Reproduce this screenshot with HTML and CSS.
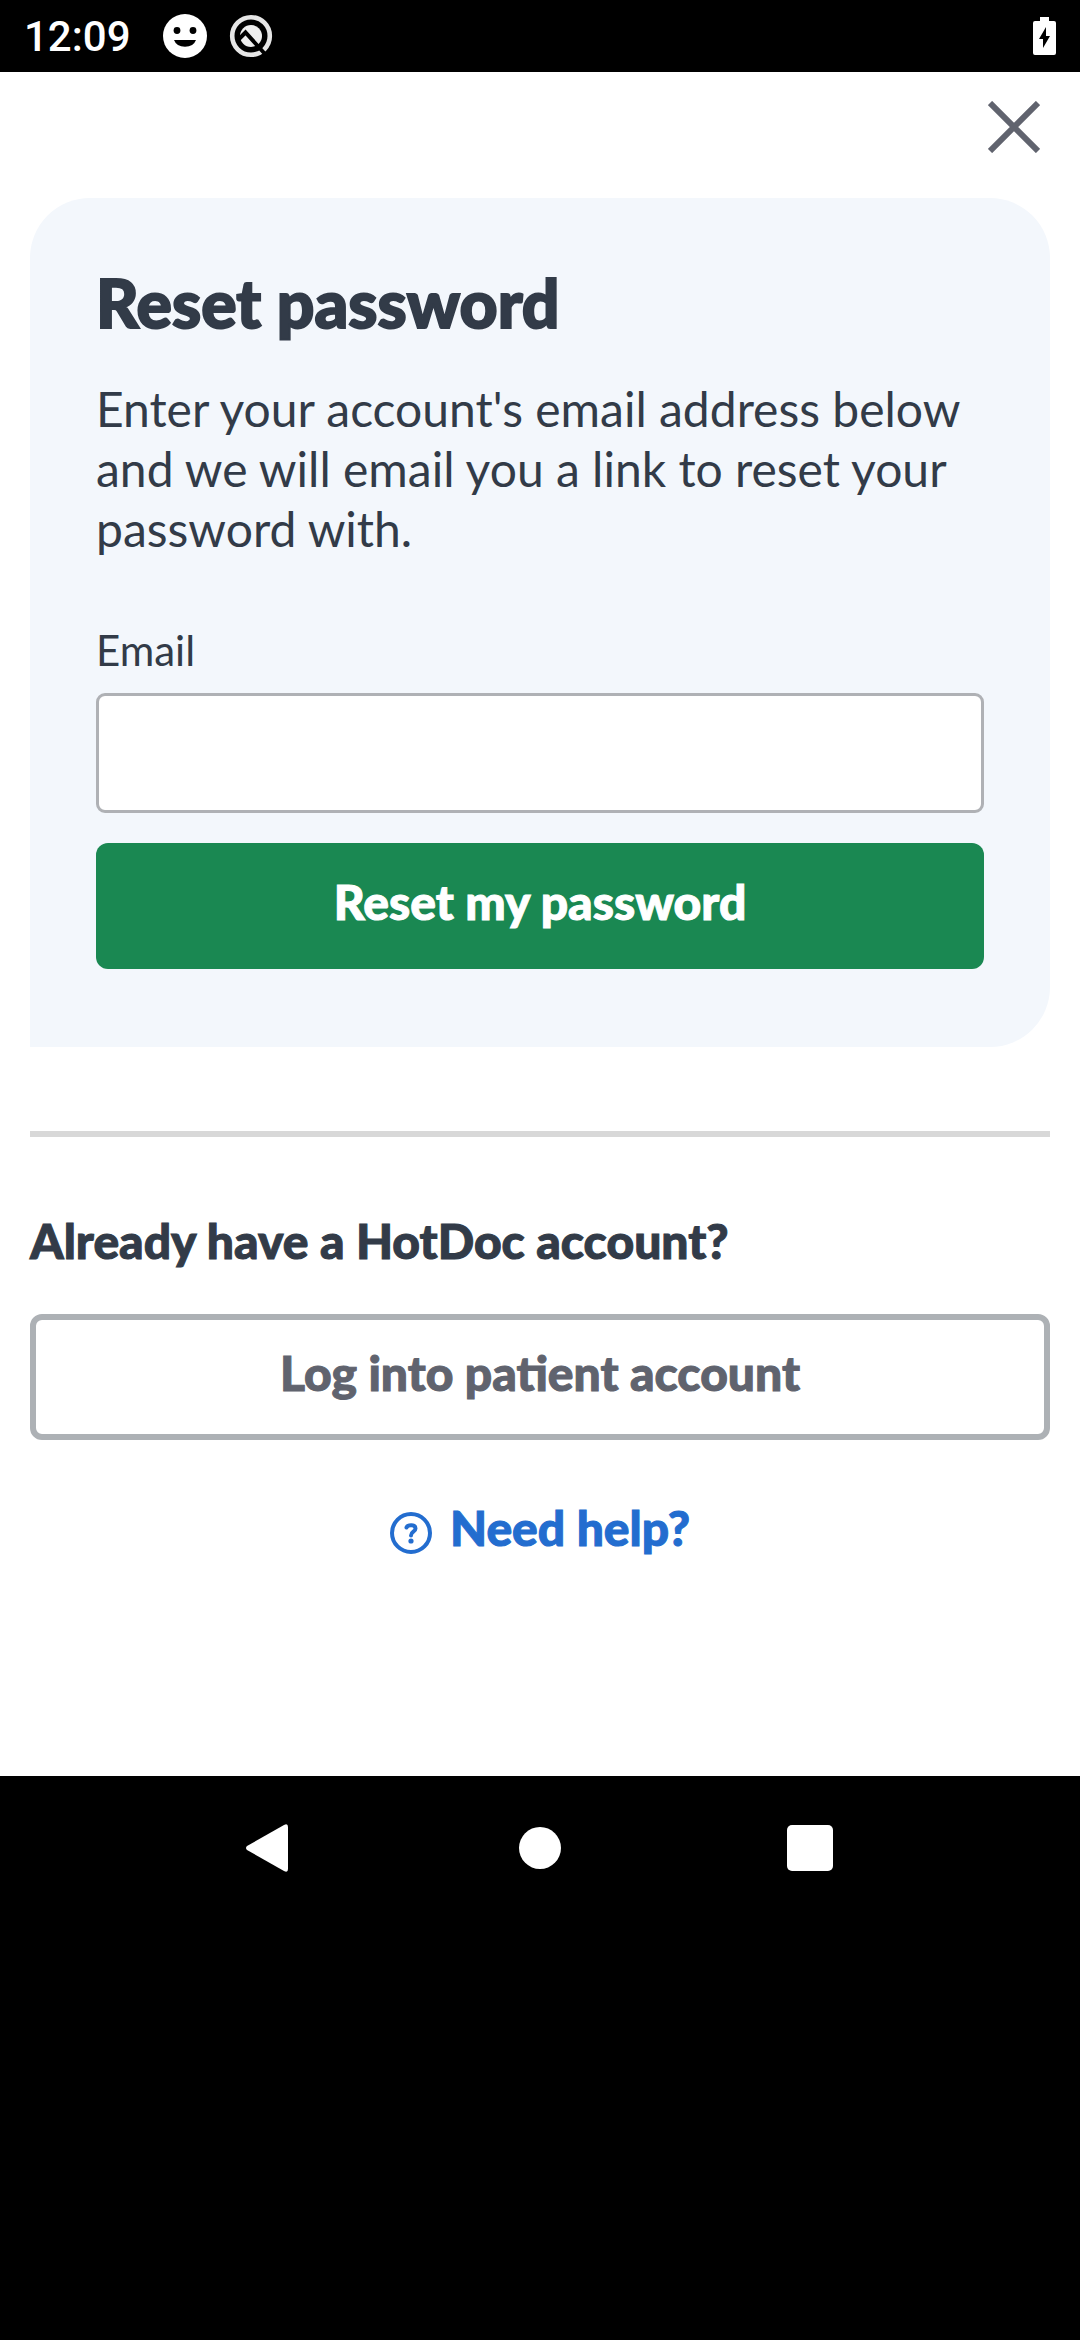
FILE: index.html
```html
<!DOCTYPE html>
<html lang="en">
<head>
<meta charset="utf-8">
<meta name="viewport" content="width=device-width, initial-scale=1">
<title>Reset password</title>
<link rel="stylesheet" href="styles.css">
</head>
<body>
<header class="status-bar">
  <span class="clock">12:09</span>
  <svg class="status-icon" viewBox="0 0 44 44" aria-hidden="true">
    <circle cx="22" cy="22" r="22" fill="#fff"/>
    <circle cx="14" cy="16.500" r="3.400"/>
    <circle cx="30" cy="16.500" r="3.400"/>
    <path d="M11 26h22a11.500 9.500 0 0 1-22 0z"/>
  </svg>
  <svg class="status-icon" viewBox="0 0 44 44" fill="none" aria-hidden="true">
    <circle cx="22" cy="22" r="18.800" stroke="#e6e6e6" stroke-width="4.600"/>
    <circle cx="22" cy="22" r="11" fill="#eee"/>
    <path d="M10 25l6.500-6.500L36 40" stroke="#000" stroke-width="4"/>
  </svg>
  <svg class="battery" viewBox="0 0 23 38" aria-hidden="true">
    <path d="M7 0h9v4h5a2 2 0 0 1 2 2v30a2 2 0 0 1-2 2H2a2 2 0 0 1-2-2V6a2 2 0 0 1 2-2h5z" fill="#fff"/>
    <path d="M13 10v9h4l-7 12v-9H6z"/>
  </svg>
</header>
<main class="page">
  <div class="toolbar">
    <button class="close" type="button" aria-label="Close">
      <svg viewBox="0 0 52 52" aria-hidden="true"><path d="M2 2l48 48M50 2L2 50" stroke="#60636e" stroke-width="6"/></svg>
    </button>
  </div>
  <form class="card">
    <h1 class="title">Reset password</h1>
    <p class="intro">Enter your account's email address below and we will email you a link to reset your password with.</p>
    <label class="label" for="email">Email</label>
    <input class="field" id="email" type="email">
    <button class="button button-primary" type="submit">Reset my password</button>
  </form>
  <hr class="divider">
  <h2 class="subtitle">Already have a HotDoc account?</h2>
  <button class="button button-outline" type="button">Log into patient account</button>
  <a class="help" href="#help">
    <svg class="help-icon" viewBox="0 0 42 42" fill="none" stroke="#236dcf" aria-hidden="true">
      <circle cx="21" cy="21" r="19" stroke-width="4"/>
      <path d="M16.500 15.500c1-3 9-3.500 9 1 0 3.500-4.500 3-4.500 7" stroke-width="4" stroke-linecap="round"/>
      <circle cx="21" cy="29" r="2.600" fill="#236dcf" stroke="none"/>
    </svg>
    Need help?
  </a>
</main>
<nav class="nav-bar" aria-label="System">
  <button class="nav-button" type="button" aria-label="Back">
    <svg viewBox="0 0 48 48"><path d="M1 22L38 1q4-2 4 2v42q0 4-4 2L1 26q-2-2 0-4z" fill="#fff"/></svg>
  </button>
  <button class="nav-button" type="button" aria-label="Home">
    <svg viewBox="0 0 48 48"><circle cx="24" cy="24" r="21" fill="#fff"/></svg>
  </button>
  <button class="nav-button" type="button" aria-label="Recent apps">
    <svg viewBox="0 0 48 48"><rect x="1" y="1" width="46" height="46" rx="5" fill="#fff"/></svg>
  </button>
</nav>
</body>
</html>
```
FILE: styles.css
```css
* {
  box-sizing: border-box;
}

body {
  margin: 0;
  min-height: 100vh;
  background: #000;
  color: #323b48;
  font-family: Lato, sans-serif;
}

h1, h2, p {
  margin: 0;
}

svg {
  display: block;
}

button {
  padding: 0;
  border: 0;
  background: none;
  font-family: inherit;
  cursor: pointer;
}

.status-bar {
  display: flex;
  align-items: center;
  gap: 22px;
  height: 72px;
  padding: 0 24px;
}

.clock {
  margin-right: 10px;
  padding-top: 2px;
  color: #fff;
  font: 500 42px/72px Roboto, sans-serif;
}

.status-icon {
  width: 44px;
  height: 44px;
}

.battery {
  width: 23px;
  height: 38px;
  margin-left: auto;
}

.page {
  display: flex;
  flex-direction: column;
  padding: 0 30px 218px;
  background: #fff;
}

.toolbar {
  display: flex;
  justify-content: flex-end;
  padding: 29px 10px 45px;
}

.close,
.close svg {
  width: 52px;
  height: 52px;
}

.card {
  display: flex;
  flex-direction: column;
  padding: 66px 66px 78px;
  border-radius: 60px 60px 60px 0;
  background: #f3f7fc;
}

/* Thickens the bold face to a heavy weight */
.title,
.subtitle,
.button,
.help {
  font-weight: 900;
  -webkit-text-stroke: 1px currentColor;
}

.title {
  margin-bottom: 37px;
  font-size: 66px;
  line-height: 78px;
  -webkit-text-stroke-width: 2px;
}

.intro {
  margin-bottom: 64px;
  font-size: 48px;
  line-height: 60px;
}

.label {
  margin-bottom: 16px;
  font-size: 42px;
  line-height: 54px;
}

.field {
  height: 120px;
  margin-bottom: 30px;
  padding: 0 30px;
  border: 3px solid #afb1b5;
  border-radius: 9px;
  background: #fff;
  color: inherit;
  font: inherit;
  font-size: 48px;
}

.button {
  height: 126px;
  padding-bottom: 9px;
  border-radius: 12px;
  font-size: 48px;
  line-height: 60px;
}

.button-primary {
  background: #1a8852;
  color: #fff;
}

.divider {
  width: 100%;
  height: 6px;
  margin: 84px 0 74px;
  border: 0;
  background: #d8d8d8;
}

.subtitle {
  margin-bottom: 43px;
  font-size: 48px;
  line-height: 60px;
}

.button-outline {
  border: 6px solid #adb1b5;
  color: #60636e;
}

.help {
  display: flex;
  align-items: center;
  align-self: center;
  gap: 18px;
  margin-top: 58px;
  color: #236dcf;
  font-size: 48px;
  line-height: 60px;
  text-decoration: none;
}

.help-icon {
  width: 42px;
  height: 42px;
  margin-top: 10px;
}

.nav-bar {
  display: flex;
  justify-content: center;
  gap: 222px;
  padding: 48px 0;
}

.nav-button,
.nav-button svg {
  width: 48px;
  height: 48px;
}
```
